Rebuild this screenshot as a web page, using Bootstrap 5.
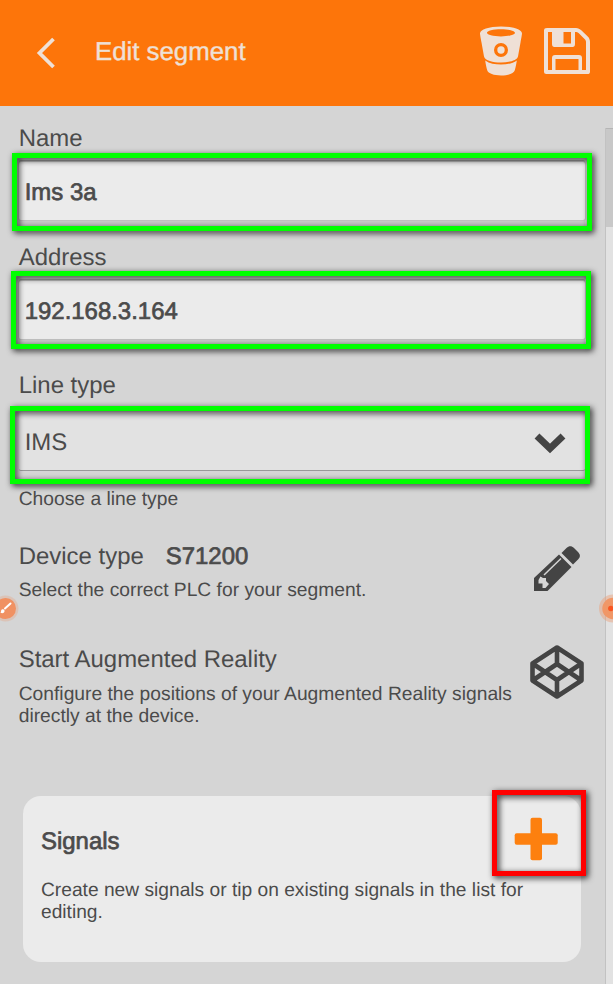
<!DOCTYPE html>
<html lang="en">
<head>
<meta charset="utf-8">
<meta name="viewport" content="width=device-width, initial-scale=1">
<title>Edit segment</title>
<link href="https://cdn.jsdelivr.net/npm/bootstrap@5.3.0/dist/css/bootstrap.min.css" rel="stylesheet">
<style>
body{background:#d5d5d5;color:#4b4b4b;font-family:"Liberation Sans",Arial,sans-serif;text-rendering:geometricPrecision;height:984px}
svg{display:block;flex:none}
.app-bar{height:105.5px;background:#fd750a;color:#efe0d6;padding:0 22px 3px 36px}
.back-icon{margin-top:3px}
.app-title{font-size:25.8px;line-height:30px;margin-left:39px;padding-top:1px;-webkit-text-stroke:.4px}
.app-icons{gap:20px}
.form-area{padding:19px 20px 0 18.7px;min-width:0}
.field-label{font-size:23.95px;line-height:28px;display:block}
.strong-text{-webkit-text-stroke:.7px}
.hint{font-size:19.25px;line-height:22.3px}
.field-box{height:58px;margin-top:9.5px;padding:4px 19px 0 6px;background:#ebebeb;border-radius:2px;font-size:23.95px;line-height:28px;box-shadow:0 0 0 1px #c0c0c0,0 -2px 0 #a2a2a2,0 9px 0 #c9c9c9}
.select-box{height:59px;margin-top:12px;background:#e2e2e2;border-bottom:1px solid #999;box-shadow:none}
.address-label{margin-top:23.5px}
.line-label{margin-top:32.5px}
.line-hint{margin-top:18.3px}
.device-row{margin-top:31.7px}
.device-value{margin-left:22px}
.device-hint{margin-top:9.5px}
.pencil-icon{margin:2px 5px 0 0}
.ar-row{margin-top:43px}
.ar-hint{margin-top:10.2px}
.ar-icon{margin-top:-1.5px}
.mark-frame{position:absolute;width:580px;height:78px;border:5px solid #0f0;filter:drop-shadow(2px 2px 3px rgba(0,0,0,.85));pointer-events:none}
.frame-a{left:-6.7px;top:-9px}
.frame-b{left:-7.7px;top:-10px}
.frame-c{left:-8.7px;top:-6px}
.frame-d{width:94px;height:86px;border-color:red;right:-5px;top:-6px}
.signal-card{margin:67.8px 0 0 4.3px;width:558px;height:166px;background:#ebebeb;border:0;border-radius:18px;padding:32px 24px 0 18px}
.signal-hint{margin-top:23.5px;font-size:19.2px}
.add-icon{position:absolute;right:23px;top:21px}
.scroll-rail{width:8px;margin-top:22px;background:#e2e2e2;border-left:1px solid #c2c2c2}
.scroll-thumb{height:99px;background:#c8c8c8;border-top:1px solid #b5b5b5}
.bubble{position:absolute;top:594px}
</style>
</head>
<body class="d-flex flex-column overflow-hidden position-relative">
<header class="app-bar d-flex align-items-center flex-shrink-0">
  <svg class="back-icon" width="20" height="32" viewBox="0 0 20 32" fill="none" stroke="currentColor" stroke-width="3.8"><path d="M17.500 2 3.500 16 17.500 30"/></svg>
  <h1 class="app-title fw-normal mb-0">Edit segment</h1>
  <div class="app-icons d-flex align-items-center ms-auto">
    <svg width="44" height="50" viewBox="0 0 44 50"><path fill="currentColor" fill-rule="evenodd" d="M22 .5C10 .5 1 3.500 1 7.500c0 1 .8 5 1.500 9l2.500 14c1 4 9 6 17 6s16-2 17-6l2.500-14C42.200 12.500 43 8.500 43 7.500c0-4-9-7-21-7ZM22 3.200c8 0 14 1.600 14 3.600s-6 3.600-14 3.600-14-1.600-14-3.600 6-3.600 14-3.600ZM22 17a7 7 0 1 1 0 14 7 7 0 0 1 0-14ZM6.200 34.500c4 3 10 4 15.800 4s11.800-1 15.800-4c-.6 4-1.300 7.500-2 9.800-1.100 3.300-6.800 5.200-13.800 5.200s-12.700-1.900-13.800-5.200c-.7-2.300-1.400-5.800-2-9.800Z"/><circle cx="22" cy="24" r="3.700" fill="currentColor"/></svg>
    <svg width="48" height="48" viewBox="0 0 48 48"><path fill="currentColor" fill-rule="evenodd" d="M4 1h29c2 0 4 1 5.300 2.300l6.700 6.500C46.300 11.200 47 13 47 15v29.500c0 2-.8 2.500-2.500 2.500h-41C1.800 47 1 46.200 1 44.500v-41C1 1.800 2 1 4 1ZM5 5v38h4V31c0-2 1-3 3-3h24c2 0 3 1 3 3v12h4V15c0-1-.5-2-1.200-2.700l-6-6C35 5.500 34 5 32 5v12c0 2-.8 3-2.500 3h-18C9.800 20 9 19 9 17V5ZM20.500 5v11.500H28V5ZM12.500 32v11h23V32Z"/></svg>
  </div>
</header>
<div class="d-flex flex-grow-1">
  <main class="form-area flex-grow-1">
    <label class="field-label">Name</label>
    <div class="field-box strong-text position-relative d-flex align-items-center">Ims 3a<span class="mark-frame frame-a"></span></div>
    <label class="field-label address-label">Address</label>
    <div class="field-box strong-text position-relative d-flex align-items-center">192.168.3.164<span class="mark-frame frame-b"></span></div>
    <label class="field-label line-label">Line type</label>
    <div class="field-box select-box position-relative d-flex align-items-center justify-content-between">
      <span>IMS</span>
      <svg width="32" height="22" viewBox="0 0 32 22" fill="none" stroke="#444" stroke-width="7"><path d="M3 4 16 16.500 29 4"/></svg>
      <span class="mark-frame frame-c"></span>
    </div>
    <div class="hint line-hint">Choose a line type</div>
    <section class="device-row d-flex justify-content-between">
      <div>
        <div class="field-label">Device type<span class="strong-text device-value">S71200</span></div>
        <div class="hint device-hint">Select the correct PLC for your segment.</div>
      </div>
      <svg class="pencil-icon" width="48" height="48" viewBox="0 0 48 48"><g fill="#444"><path fill-rule="evenodd" d="M2 33 27 9.500 39.500 22 15.500 46H2ZM6.500 35v3.500h4V43h3l3.500-4-3-3v-3h-3L8.500 31.500Z"/><path d="m29.500 8 5-5c2.500-2.500 5-2.500 7.500 0l4 4c2.500 2.500 2.500 5 0 7.500l-5 5Z"/></g><path d="M12 30 29 13.500" stroke="#d5d5d5" stroke-width="1.500"/></svg>
    </section>
    <section class="ar-row d-flex justify-content-between">
      <div>
        <div class="field-label">Start Augmented Reality</div>
        <div class="hint ar-hint text-nowrap">Configure the positions of your Augmented Reality signals<br>directly at the device.</div>
      </div>
      <svg class="ar-icon" width="56" height="56" viewBox="0 0 56 56" fill="none" stroke="#444" stroke-width="4.600" stroke-linejoin="round"><path d="M28 3.500 52.500 19.500v17L28 52.500 3.500 36.500v-17ZM28 3.500v16.500M28 52.500V36M3.500 19.500 28 36l24.500-16.500M3.500 36.500 28 20l24.500 16.500"/></svg>
    </section>
    <section class="card signal-card position-relative">
      <h2 class="field-label strong-text fw-normal mb-0">Signals</h2>
      <p class="hint signal-hint text-nowrap mb-0">Create new signals or tip on existing signals in the list for<br>editing.</p>
      <svg class="add-icon" width="44" height="44" viewBox="0 0 44 44" fill="#fd800f"><rect x="16.500" y=".7" width="11.500" height="42.600" rx="2"/><rect x=".7" y="16.200" width="43" height="11.500" rx="2"/></svg>
      <span class="mark-frame frame-d"></span>
    </section>
  </main>
  <aside class="scroll-rail flex-shrink-0"><div class="scroll-thumb"></div></aside>
</div>
<svg class="bubble start-0" width="20" height="29" viewBox="0 0 20 29"><circle cx="5.500" cy="14.500" r="13" fill="#eb9d75" opacity=".3"/><circle cx="5.500" cy="14.500" r="10.500" fill="#f09162"/><path d="m5 14.500 5.500-5" stroke="#fff" stroke-width="2" stroke-linecap="round"/><path d="M.5 18.800c1-1 0-3 2-3.500 2-.3 2.700 2 1.500 3.200-1 .9-2.300.8-3.500.3Z" fill="#fff"/></svg>
<svg class="bubble end-0" width="15" height="29" viewBox="0 0 15 29"><circle cx="15" cy="14.500" r="14" fill="#eb9d75" opacity=".45"/><circle cx="15" cy="14.500" r="10.700" fill="#f09767"/><circle cx="12.800" cy="14.500" r="2.700" fill="#fa5520"/></svg>
<script src="https://cdn.jsdelivr.net/npm/bootstrap@5.3.0/dist/js/bootstrap.bundle.min.js"></script>
</body>
</html>
